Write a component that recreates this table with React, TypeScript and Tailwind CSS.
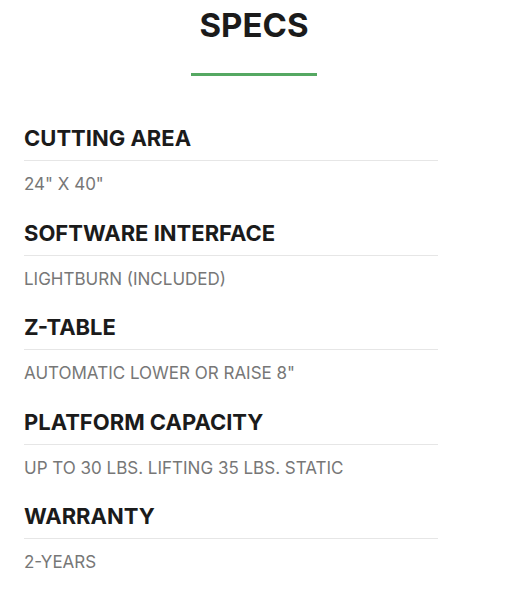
const specs = [
  { label: "CUTTING AREA", value: '24" X 40"' },
  { label: "SOFTWARE INTERFACE", value: "LIGHTBURN (INCLUDED)" },
  { label: "Z-TABLE", value: 'AUTOMATIC LOWER OR RAISE 8"' },
  { label: "PLATFORM CAPACITY", value: "UP TO 30 LBS. LIFTING 35 LBS. STATIC" },
  { label: "WARRANTY", value: "2-YEARS" },
];

export default function App() {
  return (
    <div className="min-h-screen bg-white" style={{ fontFamily: "Inter, 'Noto Sans', sans-serif" }}>
      {/* Title */}
      <div className="flex flex-col items-center pt-[5px]">
        <h1 className="text-[33px] leading-[40px] font-bold text-[#1b1b1b]">SPECS</h1>
        <div className="mt-[28px] h-[3px] w-[126px] bg-[#55a862]" />
      </div>

      {/* Spec list */}
      <div className="mt-[46px] pl-6 w-[438px]">
        {specs.map((s) => (
          <div key={s.label} className="mb-[18.5px]">
            <h3 className="text-[22px] leading-[33px] font-bold text-[#1b1b1b] pb-[5px] border-b border-[#e6e6e6]">
              {s.label}
            </h3>
            <p className="pt-[10px] text-[17px] leading-[27px] text-[#777777]">{s.value}</p>
          </div>
        ))}
      </div>
    </div>
  );
}
